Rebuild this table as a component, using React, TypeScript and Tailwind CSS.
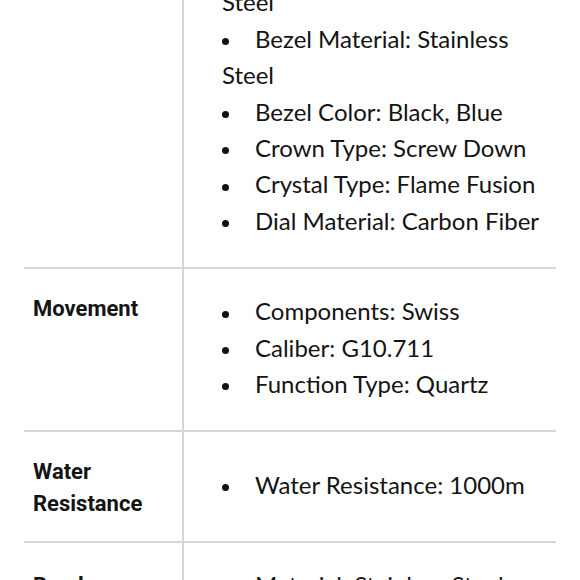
type Item = { lines: string[] };

const body = { fontFamily: 'Lato, "Liberation Sans", sans-serif' };
const label = { fontFamily: 'Roboto, "Liberation Sans", sans-serif' };

function Bullet() {
  return <span className="inline-block w-[7px] h-[7px] rounded-full bg-[#111] align-middle mr-[26px]" />;
}

function List({ items }: { items: Item[] }) {
  return (
    <ul className="flex flex-col">
      {items.map((it, i) => (
        <li key={i} className="flex flex-col">
          {it.lines.map((l, j) => (
            <span key={j} className="whitespace-nowrap">
              {j === 0 && <Bullet />}
              {l}
            </span>
          ))}
        </li>
      ))}
    </ul>
  );
}

function Row({
  title,
  items,
  lpt = "pt-6",
  cls = "justify-center",
}: {
  title: string[];
  items: Item[];
  lpt?: string;
  cls?: string;
}) {
  return (
    <div className="flex border-b-2 border-[#d6d6d6]">
      <div
        className={`w-[160px] shrink-0 border-r-2 border-[#d6d6d6] pl-[9px] ${lpt} pb-[21px] text-[22px] leading-[32px] font-bold text-[#141414]`}
        style={label}
      >
        {title.map((t) => (
          <div key={t}>{t}</div>
        ))}
      </div>
      <div
        className={`flex-1 flex flex-col ${cls} pl-[38px] pt-6 pb-[28px] text-[24px] leading-[36.4px] text-[#141414]`}
        style={body}
      >
        <List items={items} />
      </div>
    </div>
  );
}

export default function App() {
  return (
    <div className="w-[580px] h-[580px] overflow-hidden bg-white">
      <div className="mx-[24px] -mt-[76px]">
        <Row
          title={["Case"]}
          items={[
            { lines: ["Case Material: Stainless", "Steel"] },
            { lines: ["Bezel Material: Stainless", "Steel"] },
            { lines: ["Bezel Color: Black, Blue"] },
            { lines: ["Crown Type: Screw Down"] },
            { lines: ["Crystal Type: Flame Fusion"] },
            { lines: ["Dial Material: Carbon Fiber"] },
          ]}
        />
        <Row
          title={["Movement"]}
          items={[
            { lines: ["Components: Swiss"] },
            { lines: ["Caliber: G10.711"] },
            { lines: ["Function Type: Quartz"] },
          ]}
        />
        <Row title={["Water", "Resistance"]} items={[{ lines: ["Water Resistance: 1000m"] }]} />
        <Row
          title={["Band"]}
          lpt="pt-[27px]"
          cls="justify-start"
          items={[
            { lines: ["Material: Stainless Steel"] },
            { lines: ["Type: Bracelet"] },
          ]}
        />
      </div>
    </div>
  );
}
